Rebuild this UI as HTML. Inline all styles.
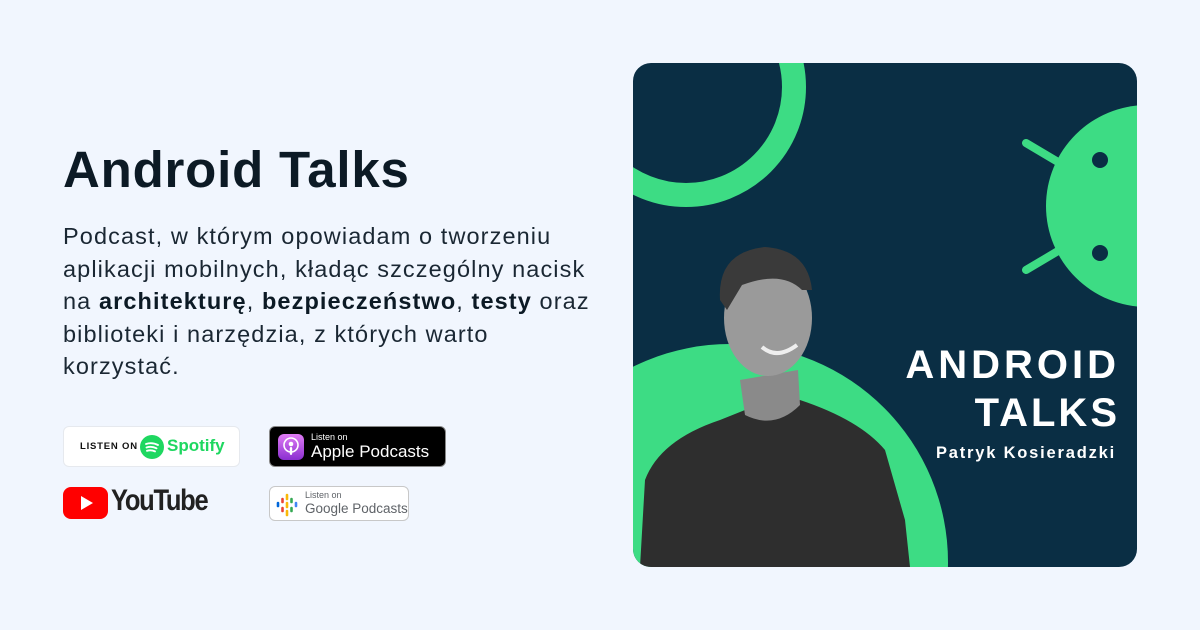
<!DOCTYPE html>
<html><head><meta charset="utf-8"><style>
*{margin:0;padding:0;box-sizing:border-box}
html,body{width:1200px;height:630px;overflow:hidden}
body{background:#f1f6fe;font-family:"Liberation Sans",sans-serif;position:relative;color:#0d1b26}
h1{position:absolute;left:63px;top:140px;font-size:51px;font-weight:700;letter-spacing:0.8px;color:#0c1a25}
.p{position:absolute;left:63px;top:220px;font-size:23.5px;line-height:32.5px;color:#1a2733;white-space:nowrap;letter-spacing:1.1px}
.p b{color:#0c1a25}
.badge{position:absolute;border-radius:6px}
</style></head><body>
<h1>Android Talks</h1>
<div class="p">Podcast, w którym opowiadam o tworzeniu<br>aplikacji mobilnych, kładąc szczególny nacisk<br>na <b>architekturę</b>, <b>bezpieczeństwo</b>, <b>testy</b> oraz<br>biblioteki i narzędzia, z których warto<br>korzystać.</div>

<div class="badge" style="left:63px;top:426px;width:177px;height:41px;background:#fff;border:1px solid #e6e9ee">
 <span style="position:absolute;left:16px;top:14px;font-size:9.5px;font-weight:700;letter-spacing:0.8px;color:#111">LISTEN ON</span>
 <svg style="position:absolute;left:76px;top:8px" width="24" height="24" viewBox="0 0 24 24"><circle cx="12" cy="12" r="12" fill="#1ed760"/><path d="M6 9q6-2 12 1M6.5 12.5q5-1.6 10 .8M7 15.8q4-1.2 8 .6" stroke="#fff" stroke-width="1.9" fill="none" stroke-linecap="round"/></svg>
 <span style="position:absolute;left:103px;top:9px;font-size:17px;font-weight:700;color:#1ed760">Spotify</span>
</div>
<div class="badge" style="left:269px;top:426px;width:177px;height:41px;background:#000;border:1px solid #888">
 <div style="position:absolute;left:8px;top:7px;width:26px;height:26px;border-radius:6px;background:linear-gradient(#e07cf5,#8a2ed0)"></div>
 <svg style="position:absolute;left:8px;top:7px" width="26" height="26" viewBox="0 0 26 26"><circle cx="13" cy="11" r="7" stroke="#fff" stroke-width="1.6" fill="none"/><circle cx="13" cy="10" r="2.3" fill="#fff"/><rect x="11.8" y="13" width="2.4" height="8" rx="1.2" fill="#fff"/></svg>
 <span style="position:absolute;left:41px;top:5px;font-size:9px;color:#fff">Listen on</span>
 <span style="position:absolute;left:41px;top:15px;font-size:17px;color:#fff">Apple Podcasts</span>
</div>
<svg style="position:absolute;left:63px;top:487px" width="45" height="32" viewBox="0 0 45 32"><rect width="45" height="32" rx="8" fill="#ff0000"/><path d="M18 9l12 7-12 7z" fill="#fff"/></svg>
<div style="position:absolute;left:111px;top:484px;width:100px;height:36px;overflow:hidden"><span style="display:block;font-size:30px;font-weight:700;letter-spacing:-1.5px;color:#212121;transform:scaleX(0.85);transform-origin:left;white-space:nowrap">YouTube</span></div>
<div class="badge" style="left:269px;top:486px;width:140px;height:35px;background:#fff;border:1px solid #c8c8c8">
 <svg style="position:absolute;left:6px;top:6px" width="22" height="24" viewBox="0 0 22 24"><g stroke-linecap="round" stroke-width="2.6"><path d="M2 10v3" stroke="#0066d9"/><path d="M6.5 6v3M6.5 15v3" stroke="#ea4335"/><path d="M11 2v4M11 10v4M11 18v4" stroke="#fab908"/><path d="M15.5 6v3M15.5 15v3" stroke="#34a853"/><path d="M20 10v3" stroke="#4285f4"/></g></svg>
 <span style="position:absolute;left:35px;top:3px;font-size:9px;color:#5f6368">Listen on</span>
 <span style="position:absolute;left:35px;top:14px;font-size:13.5px;color:#5f6368">Google Podcasts</span>
</div>

<svg style="position:absolute;left:633px;top:63px" width="504" height="504" viewBox="633 63 504 504">
<defs><clipPath id="c"><rect x="633" y="63" width="504" height="504" rx="18"/></clipPath></defs>
<g clip-path="url(#c)">
<rect x="633" y="63" width="504" height="504" fill="#0a2e44"/>
<circle cx="686" cy="87" r="108" stroke="#3ddc84" stroke-width="24" fill="none"/>
<circle cx="1147" cy="206" r="101" fill="#3ddc84"/>
<circle cx="1100" cy="160" r="8" fill="#0a2e44"/><circle cx="1100" cy="253" r="8" fill="#0a2e44"/>
<path d="M1026 143L1058 162M1026 270L1058 251" stroke="#3ddc84" stroke-width="8" stroke-linecap="round"/>
<circle cx="730" cy="562" r="218" fill="#3ddc84"/>
<path d="M640 567L645 480Q660 440 720 420L745 410L800 400Q860 420 885 450L905 520L910 567Z" fill="#2e2e2e"/>
<path d="M740 380L745 415Q775 430 800 405L798 370Z" fill="#8a8a8a"/>
<ellipse cx="768" cy="318" rx="44" ry="58" fill="#9a9a9a"/>
<path d="M720 300Q717 252 765 247Q808 250 812 290L802 290Q782 270 742 285L727 310Z" fill="#3a3a3a"/>
<path d="M762 347Q777 360 797 345" stroke="#eee" stroke-width="4" fill="none"/>
<text x="1120" y="378" text-anchor="end" font-family="Liberation Sans" font-weight="700" font-size="40" letter-spacing="4" fill="#fff">ANDROID</text>
<text x="1120" y="426" text-anchor="end" font-family="Liberation Sans" font-weight="700" font-size="40" letter-spacing="3" fill="#fff">TALKS</text>
<text x="1116" y="458" text-anchor="end" font-family="Liberation Sans" font-weight="700" font-size="16.5" letter-spacing="1.8" fill="#fff">Patryk Kosieradzki</text>
</g></svg>
</body></html>
